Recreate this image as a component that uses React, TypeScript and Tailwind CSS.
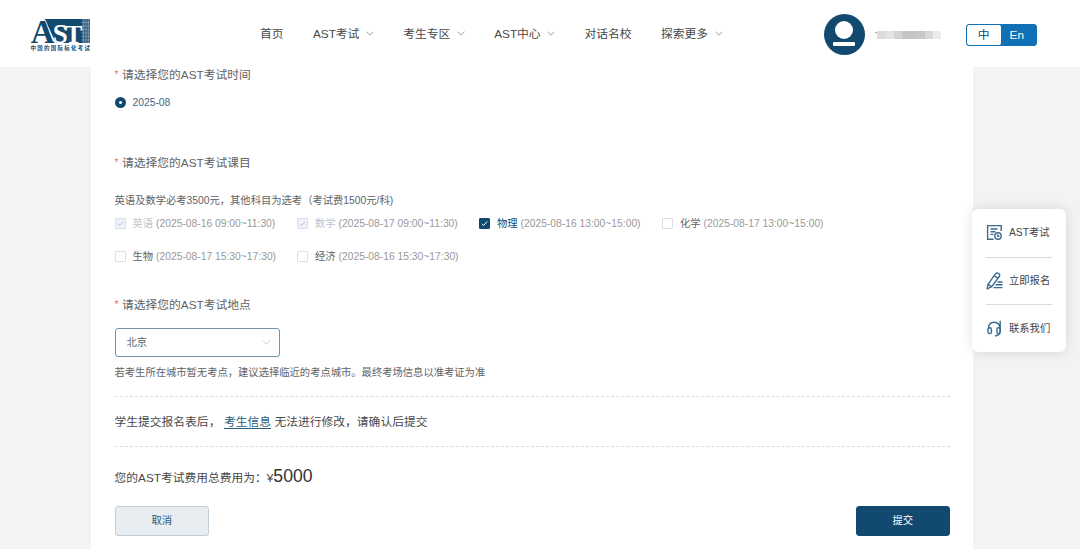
import { useState } from 'react'
import clsx from 'clsx'

interface NavItem {
  label: string
  hasMenu?: boolean
}

interface Subject {
  name: string
  time: string
  required?: boolean
}

const NAV_ITEMS: NavItem[] = [
  { label: '首页' },
  { label: 'AST考试', hasMenu: true },
  { label: '考生专区', hasMenu: true },
  { label: 'AST中心', hasMenu: true },
  { label: '对话名校' },
  { label: '探索更多', hasMenu: true },
]

const SUBJECTS: Subject[] = [
  { name: '英语', time: '(2025-08-16 09:00~11:30)', required: true },
  { name: '数学', time: '(2025-08-17 09:00~11:30)', required: true },
  { name: '物理', time: '(2025-08-16 13:00~15:00)' },
  { name: '化学', time: '(2025-08-17 13:00~15:00)' },
  { name: '生物', time: '(2025-08-17 15:30~17:30)' },
  { name: '经济', time: '(2025-08-16 15:30~17:30)' },
]

export default function App() {
  const [selected, setSelected] = useState<string[]>(['英语', '数学', '物理'])

  const toggle = (s: Subject) => {
    if (s.required) return
    setSelected((prev) => (prev.includes(s.name) ? prev.filter((n) => n !== s.name) : [...prev, s.name]))
  }

  return (
    <div className="relative flex h-[549px] w-[1080px] flex-col overflow-hidden bg-[#f2f3f5] font-['Liberation_Sans','Noto_Sans_CJK_SC',sans-serif] text-[11.77px] leading-4 text-[#606266]">
      <Header />

      <main className="ml-[91px] flex w-[882px] flex-1 flex-col bg-white pr-[23px] pl-[23.5px]">
        <FieldLabel>请选择您的AST考试时间</FieldLabel>
        <label className="mt-[11px] flex h-4 items-center text-[10.3px] text-[#3b6685]">
          <span className="mr-[7px] flex h-[11px] w-[11px] items-center justify-center rounded-full bg-[#12496f]">
            <span className="h-[3px] w-[3px] rounded-full bg-white" />
          </span>
          <span className="pt-px">2025-08</span>
        </label>

        <FieldLabel className="mt-[45px]">请选择您的AST考试课目</FieldLabel>
        <p className="mt-[22px] h-4 text-[10.3px]">英语及数学必考3500元，其他科目为选考（考试费1500元/科)</p>
        <div className="mt-1.5 grid grid-cols-[182.5px_182px_183px_170px] gap-y-[17px]">
          {SUBJECTS.map((s) => (
            <SubjectOption key={s.name} subject={s} checked={selected.includes(s.name)} onToggle={() => toggle(s)} />
          ))}
        </div>

        <FieldLabel className="mt-[33px]">请选择您的AST考试地点</FieldLabel>
        <button className="mt-[15px] flex h-[29px] w-[165px] shrink-0 items-center justify-between rounded-[3px] border border-[#7393aa] pr-2 pl-[11px] text-[10.3px]">
          北京
          <Chevron className="h-[5px] w-[9px] text-[#c0c4cc]" />
        </button>
        <p className="mt-2 h-4 text-[10.3px]">若考生所在城市暂无考点，建议选择临近的考点城市。最终考场信息以准考证为准</p>

        <div className="mt-[15px] flex h-[51px] shrink-0 items-center border-y border-dashed border-[#dcdcdc] text-[#484848]">
          学生提交报名表后，
          <a href="#" className="mx-[3.5px] text-[#2a5c80] underline underline-offset-2">考生信息</a>
          无法进行修改，请确认后提交
        </div>

        <div className="mt-[17px] flex h-6 items-baseline leading-6 text-[#484848]">
          您的AST考试费用总费用为：¥
          <span className="text-[17.6px] text-[#333]">5000</span>
        </div>

        <div className="mt-[18px] flex justify-between text-[10.3px]">
          <button className="h-[29.5px] w-[94.5px] rounded-[3px] border border-[#c1d0da] bg-[#e7edf1] text-[#2a5c80]">取消</button>
          <button className="h-[29.5px] w-[94.5px] rounded-[3px] border border-[#12496f] bg-[#12496f] text-white">提交</button>
        </div>
      </main>

      {/* Floating shortcuts */}
      <aside className="absolute top-[209px] left-[972px] flex h-[143px] w-[94px] flex-col rounded-md bg-white px-3.5 text-[10.3px] text-[#444] shadow-[0_0_12px_rgba(0,0,0,0.13)]">
        <a className="flex h-[48.5px] items-center gap-1.5 border-b border-[#dadada]">
          <ExamIcon />
          AST考试
        </a>
        <a className="flex h-[47.5px] items-center gap-1.5 border-b border-[#dadada]">
          <PencilIcon />
          立即报名
        </a>
        <a className="flex h-[47px] items-center gap-1.5">
          <HeadsetIcon />
          联系我们
        </a>
      </aside>
    </div>
  )
}

function Header() {
  return (
    <header className="flex h-[67px] shrink-0 items-center bg-white pl-[30px] text-[#484848]">
      <Logo />
      <nav className="ml-[169px] flex w-[563.5px] items-center gap-[29.4px]">
        {NAV_ITEMS.map((item) => (
          <a key={item.label} className="flex items-center gap-[6.5px] whitespace-nowrap">
            {item.label}
            {item.hasMenu && <Chevron className="h-[5px] w-2 text-[#999]" />}
          </a>
        ))}
      </nav>

      <div className="mt-[2px] flex h-[41px] w-[41px] flex-col items-center rounded-full bg-[#12496f] pt-[7px]">
        <span className="h-[18px] w-[18px] rounded-full bg-white" />
        <span className="mt-[3px] h-1 w-[22px] rounded-[1px] bg-white" />
      </div>

      {/* Masked account name */}
      <div className="mt-px ml-2.5 flex h-2.5 w-[67px] items-end">
        <span className="mb-[6px] h-px w-0.5 bg-[#aaa]" />
        <span className="h-2 w-[9px] bg-[#dcdcdf]" />
        <span className="h-2 w-2 bg-[#e5e5e7]" />
        <span className="h-2 w-2 bg-[#d4d4d6]" />
        <span className="h-2 w-[15px] bg-[#c5c5c8]" />
        <span className="h-2 w-2 bg-[#c9c9cb]" />
        <span className="h-2 w-2 bg-[#d8d8da]" />
        <span className="h-2 w-2 bg-[#ececed]" />
      </div>

      <div className="mt-0.5 ml-6 flex h-[22px] w-[71px] overflow-hidden rounded-[3px] border border-[#1270b5] bg-[#1270b5]">
        <span className="flex w-[34.5px] items-center justify-center rounded-[2px] bg-white text-[#12496f]">中</span>
        <span className="flex flex-1 items-center justify-center pr-[3px] text-white">En</span>
      </div>
    </header>
  )
}

function FieldLabel({ children, className }: { children: string; className?: string }) {
  return (
    <div className={clsx('flex h-4 shrink-0', className)}>
      <span className="mr-[3.5px] text-[10.3px] text-[#f56c6c]">*</span>
      {children}
    </div>
  )
}

function SubjectOption({ subject, checked, onToggle }: { subject: Subject; checked: boolean; onToggle: () => void }) {
  const active = checked && !subject.required
  return (
    <div className="flex h-4 items-center text-[10.3px] leading-[18px] whitespace-nowrap" onClick={onToggle}>
      <span
        className={clsx(
          'mr-[7px] flex h-[11px] w-[11px] shrink-0 items-center justify-center rounded-[1px] border',
          active ? 'border-[#12496f] bg-[#12496f] text-white' : 'border-[#dcdfe6] text-[#c0c4cc]',
          subject.required && 'bg-[#edf2fc]',
        )}
      >
        {checked && (
          <svg viewBox="0 0 9 9" className="h-[9px] w-[9px]" fill="none" stroke="currentColor" strokeWidth="1">
            <path d="M1.8 4.8l1.8 1.7L7.2 2.5" />
          </svg>
        )}
      </span>
      <span className={clsx('mr-[3px] pt-px', subject.required ? 'text-[#c0c4cc]' : active ? 'text-[#12496f]' : 'text-[#606266]')}>
        {subject.name}
      </span>
      <span className="pt-px text-[#999]">{subject.time}</span>
    </div>
  )
}

function Chevron({ className }: { className?: string }) {
  return (
    <svg viewBox="0 0 8 5" className={className} fill="none" stroke="currentColor" strokeWidth="0.9">
      <path d="M0.5 0.6L4 4.2L7.5 0.6" />
    </svg>
  )
}

function Logo() {
  return (
    <svg width="61" height="34" viewBox="0 0 61 34" className="mt-0.5 shrink-0 overflow-visible">
      <path d="M14.5 1H52V25H26Z" fill="#12496f" />
      {/* Mesh edge on the right */}
      <rect x="52" y="1" width="8" height="24" fill="#12496f" opacity="0.85" />
      <path
        d="M53.5 1V25M56 1V25M58.5 1V25M51 4.5H60M51 8H60M51 11.5H60M51 15H60M51 18.5H60M51 22H60"
        stroke="#fff"
        strokeWidth="0.5"
        opacity="0.5"
      />
      <text y="24.5" fontFamily="Liberation Serif" fontWeight="700" fill="#fff">
        <tspan x="0.8" fontSize="33" fill="#12496f" stroke="#fff" strokeWidth="1.4" paintOrder="stroke">A</tspan>
        <tspan x="22.8" fontSize="27">S</tspan>
        <tspan x="35" fontSize="26">T</tspan>
      </text>
      <text x="0.5" y="32" fontFamily="Noto Sans CJK SC" fontWeight="700" fontSize="5.4" textLength="59.5" fill="#12496f">中国的国际标化考试</text>
    </svg>
  )
}

function ExamIcon() {
  return (
    <svg width="17" height="17" viewBox="0 0 17 17" className="shrink-0" fill="none" stroke="#3b6b8e" strokeWidth="1.4">
      <path d="M15.2 7V1.6H1.6V15.2H7.5" />
      <path d="M4.5 5H11.5M4.5 7.7H9.5M4.5 10.4H7.5" />
      <circle cx="12" cy="12" r="3.2" />
      <path d="M11.8 10.4V12.3H13.4" />
    </svg>
  )
}

function PencilIcon() {
  return (
    <svg width="17" height="18" viewBox="0 0 17 18" className="shrink-0" fill="none" stroke="#3b6b8e" strokeWidth="1.4" strokeLinejoin="round">
      <path d="M1.2 17L2 12.3L9.6 1.7Q11 0.3 12.7 1.5Q14.3 2.7 13.3 4.5L5.7 14.7Z" />
      <path d="M2 12.3L5.7 14.7M8.3 3.8L11.8 6.3" />
      <path d="M11.5 10H16.5M9.5 12.8H16.5M7.5 15.6H16.5" />
    </svg>
  )
}

function HeadsetIcon() {
  return (
    <svg width="17" height="17" viewBox="0 0 17 17" className="shrink-0" fill="none" stroke="#3b6b8e" strokeWidth="1.4">
      <path d="M2.5 9C2.5 4.5 4.5 2.2 8 2.2C11.5 2.2 14 4.5 14 9M14.2 0.8V11C14.2 14 12 15.7 9 16" />
      <rect x="2" y="7.8" width="3.4" height="5.8" rx="1.7" />
      <rect x="10.9" y="7.8" width="3.2" height="5.8" rx="1.6" />
    </svg>
  )
}
